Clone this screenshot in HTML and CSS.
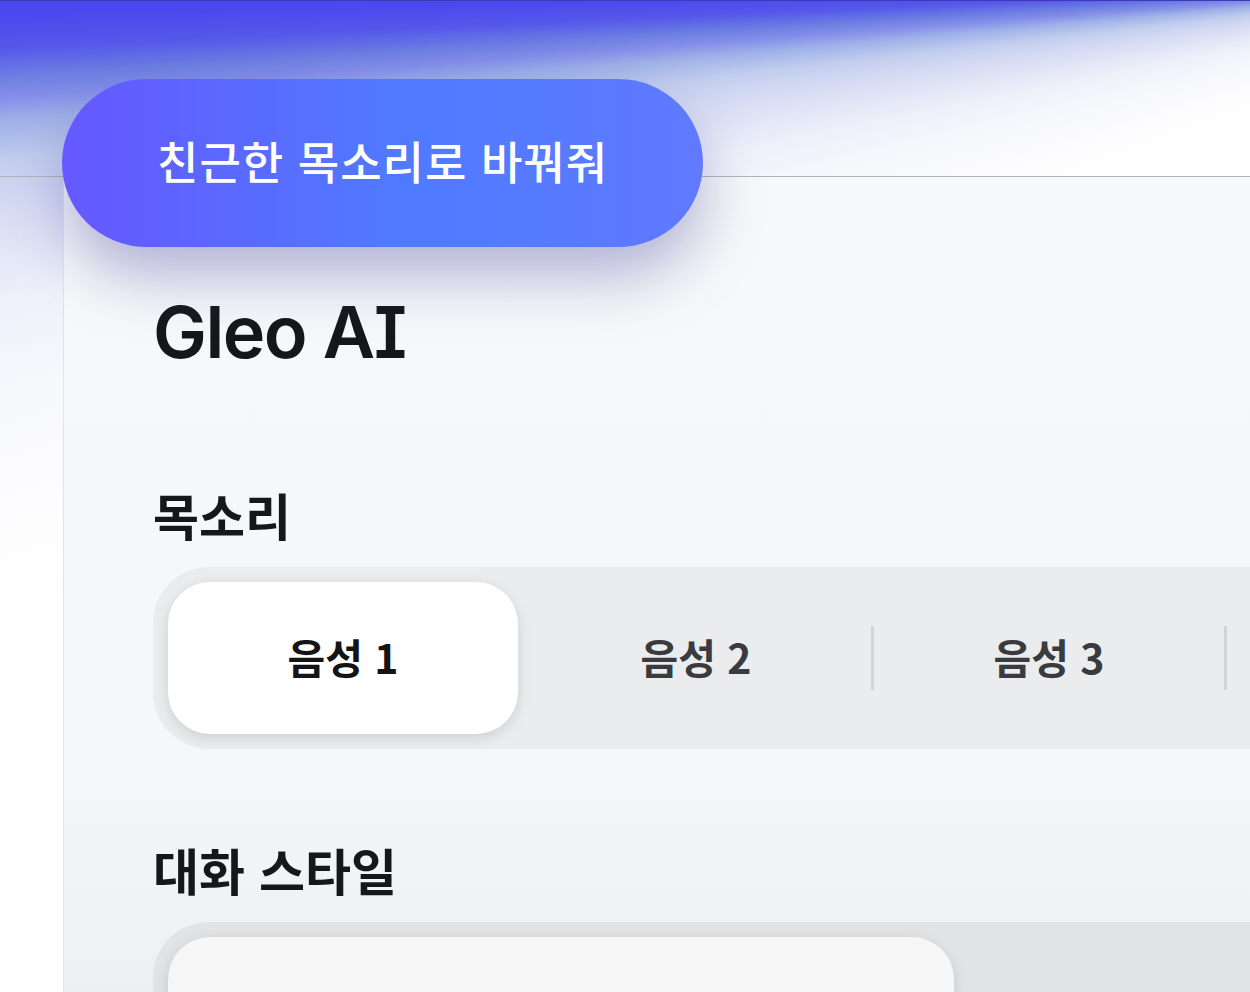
FILE: index.html
```html
<!DOCTYPE html>
<html lang="ko">
<head>
  <meta charset="UTF-8">
  <title>Gleo AI - 설정</title>
  <link rel="stylesheet" href="styles.css">
</head>
<body>
  <header class="top-bar"></header>
  <div class="bubble">친근한 목소리로 바꿔줘</div>
  <main class="panel">
    <h1 class="app-title">Gleo AI</h1>

    <section class="setting">
      <h2>목소리</h2>
      <div class="segmented">
        <button class="segment active">음성 1</button>
        <span class="divider hidden"></span>
        <button class="segment">음성 2</button>
        <span class="divider"></span>
        <button class="segment">음성 3</button>
        <span class="divider"></span>
        <button class="segment">음성 4</button>
      </div>
    </section>

    <section class="setting">
      <h2>대화 스타일</h2>
      <div class="segmented">
        <button class="segment active wide">친근하게</button>
        <button class="segment wide">정중하게</button>
      </div>
    </section>
  </main>
</body>
</html>
```

FILE: styles.css
```css
body {
  margin: 0;
  height: 992px;
  overflow: hidden;
  position: relative;
  border-top: 1px solid #3d3ab8;
  box-sizing: border-box;
  /* blue glow fanning out from the top edge */
  background: conic-gradient(from 180deg at 1600px -25px,
    #ffffff 0deg, #ffffff 68deg, #fcfcfe 72deg, #f6f7fc 76deg, #eef0fa 78.5deg,
    #e2e6f6 80.2deg, #d4daf3 82deg, #c2ceee 83.4deg, #9eb0e8 84.8deg,
    #858fea 85.6deg, #6e80e2 86.3deg, #5558ea 87.4deg, #4a48ee 88.6deg,
    #4644ee 90deg, #4644ee 180deg);
  font-family: "Noto Sans CJK KR", "Noto Sans", sans-serif;
  color: #16171a;
}
.top-bar {
  height: 175px;
  border-bottom: 1px solid #b4b5ba;
}
.bubble {
  position: absolute;
  left: 62px;
  top: 78px;
  width: 641px;
  height: 168px;
  box-sizing: border-box;
  padding: 0 0 6px 95px;
  display: flex;
  align-items: center;
  border-radius: 84px;
  background: linear-gradient(90deg, #6558ff 0%, #4f7bff 55%, #6079ff 100%);
  box-shadow: 0 28px 60px rgba(80, 80, 160, 0.42);
  color: #fff;
  font-size: 45px;
  font-weight: 500;
  letter-spacing: 1px;
  z-index: 2;
}
.panel {
  margin-left: 63px;
  height: 815px;
  border-left: 1px solid #e2e3e7;
  background: linear-gradient(to bottom, #f7f8fa 0%, #f6f7f9 70%, #eeeff1 100%);
  padding-left: 89px;
  overflow: hidden;
}
.app-title {
  margin: 118px 0 0;
  font-family: Inter, "Noto Sans", sans-serif;
  font-size: 72px;
  font-weight: 600;
  line-height: 73px;
  letter-spacing: -1.5px;
  font-feature-settings: "cv08";
}
.setting {
  margin-top: 116px;
}
.setting + .setting {
  margin-top: 90px;
}
.setting h2 {
  margin: 0 0 23px;
  font-size: 50px;
  font-weight: 700;
  line-height: 60px;
}
.segmented {
  display: flex;
  align-items: center;
  width: 1200px;
  height: 182px;
  box-sizing: border-box;
  padding: 15px;
  border-radius: 56px;
  background: #ebecee;
}
.segment {
  flex: none;
  width: 350px;
  height: 152px;
  padding: 0 0 4px;
  border: none;
  border-radius: 42px;
  background: transparent;
  font-family: "Noto Sans CJK KR", "Noto Sans", sans-serif;
  font-size: 41px;
  font-weight: 600;
  color: #3a3b3f;
}
.segment.active {
  background: #ffffff;
  color: #141416;
  font-weight: 700;
  box-shadow: 0 4px 14px rgba(0, 0, 0, 0.12);
}
.segment.wide {
  width: 786px;
}
.setting + .setting .segmented {
  background: #e2e3e5;
}
.setting + .setting .segment.active {
  background: #f6f6f7;
}
.divider {
  flex: none;
  width: 3px;
  height: 64px;
  background: #d3d4d7;
}
.divider.hidden {
  visibility: hidden;
}
```
